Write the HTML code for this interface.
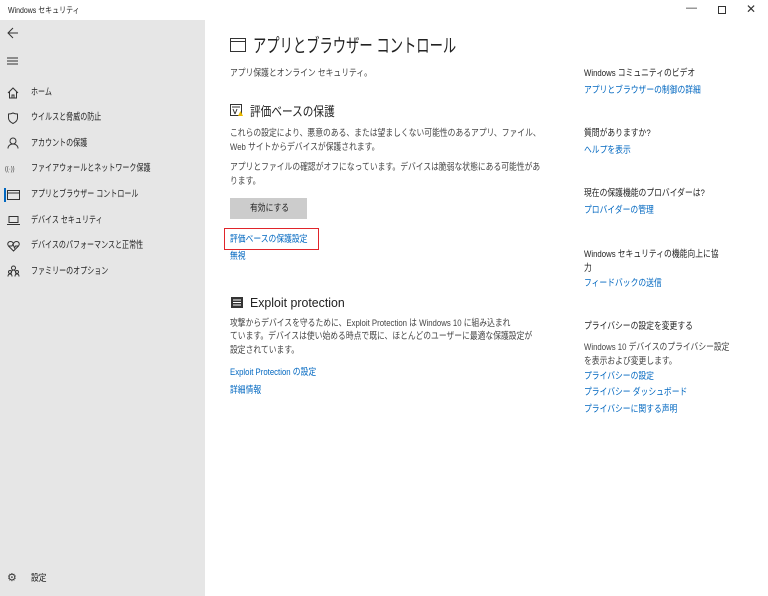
<!DOCTYPE html>
<html><head><meta charset="utf-8"><style>
*{margin:0;padding:0;box-sizing:border-box}
body{width:768px;height:596px;overflow:hidden;background:#fff;font-family:"Liberation Sans","Noto Sans CJK JP",sans-serif;color:#222;position:relative;font-size:9.5px}
.a{position:absolute;white-space:nowrap;line-height:12px;transform:scaleX(.82);transform-origin:0 0}
.sb{transform:scaleX(.74)}
.side{position:absolute;left:0;top:20px;width:205px;height:576px;background:#e6e6e6}
.l{color:#0067c0}
.g{color:#444}
svg{position:absolute}
</style></head><body>
<div class="a" style="left:8px;top:4px;font-size:8.5px">Windows セキュリティ</div>
<div class="a" style="left:686px;top:2px;font-size:11px;color:#333;transform:none">—</div>
<div style="position:absolute;left:718px;top:6px;width:8px;height:8px;border:1px solid #333"></div>
<div class="a" style="left:746px;top:3px;font-size:12px;color:#333;transform:none">✕</div>
<div class="side"></div>
<svg style="left:7px;top:27px" width="12" height="12"><path d="M11 6H1M6 1L1 6l5 5" stroke="#333" fill="none"/></svg>
<svg style="left:7px;top:57px" width="12" height="8"><path d="M0 1h11M0 4h11M0 7h11" stroke="#333"/></svg>
<div style="position:absolute;left:4px;top:188px;width:2px;height:14px;background:#0067c0"></div>
<svg style="left:7px;top:87px" width="12" height="12"><path d="M1 6L6 1l5 5M2.5 5v6h7V5M5 11V8h2v3" stroke="#333" fill="none"/></svg>
<svg style="left:7px;top:112px" width="12" height="12"><path d="M6 1C4 2 2 2 1.5 2v4c0 3 2.5 4.5 4.5 5.5 2-1 4.5-2.5 4.5-5.5V2C10 2 8 2 6 1z" stroke="#333" fill="none"/></svg>
<svg style="left:7px;top:137px" width="12" height="12"><circle cx="6" cy="4" r="3" stroke="#333" fill="none"/><path d="M1 11.5c0-3 2.5-4.5 5-4.5s5 1.5 5 4.5" stroke="#333" fill="none"/></svg>
<div class="a" style="left:5px;top:164px;font-size:7px;color:#333">((·))</div>
<svg style="left:7px;top:189px" width="13" height="12"><rect x="0.5" y="1.5" width="12" height="9" stroke="#333" fill="none"/><path d="M0.5 4h12" stroke="#333"/></svg>
<svg style="left:7px;top:214px" width="13" height="12"><rect x="2" y="2.5" width="9" height="6" stroke="#333" fill="none"/><path d="M0 10.5h13" stroke="#333"/></svg>
<svg style="left:7px;top:240px" width="13" height="12"><path d="M6.5 11L1.5 6C0 4 1 1.5 3.5 1.5 5 1.5 6 2.5 6.5 3.5 7 2.5 8 1.5 9.5 1.5 12 1.5 13 4 11.5 6z M2 6h3l1-2 1.5 4 1-2h3" stroke="#333" fill="none"/></svg>
<svg style="left:7px;top:265px" width="13" height="12"><circle cx="6.5" cy="3" r="2" stroke="#333" fill="none"/><circle cx="3" cy="7" r="1.5" stroke="#333" fill="none"/><circle cx="10" cy="7" r="1.5" stroke="#333" fill="none"/><path d="M1 11.5c0-2 1-2.5 2-2.5s2 .5 2 2.5M8 11.5c0-2 1-2.5 2-2.5s2 .5 2 2.5M4 9c0-2 1-4 2.5-4S9 7 9 9" stroke="#333" fill="none"/></svg>
<div class="a sb" style="left:31px;top:87px">ホーム</div>
<div class="a sb" style="left:31px;top:112px">ウイルスと脅威の防止</div>
<div class="a sb" style="left:31px;top:138px">アカウントの保護</div>
<div class="a sb" style="left:31px;top:163px">ファイアウォールとネットワーク保護</div>
<div class="a sb" style="left:31px;top:189px">アプリとブラウザー コントロール</div>
<div class="a sb" style="left:31px;top:215px">デバイス セキュリティ</div>
<div class="a sb" style="left:31px;top:240px">デバイスのパフォーマンスと正常性</div>
<div class="a sb" style="left:31px;top:266px">ファミリーのオプション</div>
<div class="a" style="left:7px;top:572px;font-size:11px;color:#333;transform:none">⚙</div>
<div class="a" style="left:31px;top:573px">設定</div>

<svg style="left:230px;top:38px" width="16" height="14"><rect x="0.5" y="0.5" width="15" height="13" stroke="#333" fill="none"/><path d="M0.5 3.5h15" stroke="#333"/></svg>
<div class="a" style="left:253px;top:35px;font-size:19px;line-height:24px;transform:scaleX(.7)">アプリとブラウザー コントロール</div>
<div class="a g" style="left:230px;top:68px">アプリ保護とオンライン セキュリティ。</div>
<svg style="left:230px;top:104px" width="13" height="13"><rect x="0.5" y="0.5" width="11" height="11" stroke="#333" fill="none"/><path d="M2 3h8M3 5l2 5M7 5l-2 5" stroke="#333" fill="none"/><path d="M8 12l2.5-5 2.5 5z" fill="#e8b800"/></svg>
<div class="a" style="left:250px;top:103px;font-size:13px;line-height:18px">評価ベースの保護</div>
<div class="a g" style="left:230px;top:127px;line-height:14px">これらの設定により、悪意のある、または望ましくない可能性のあるアプリ、ファイル、<br>Web サイトからデバイスが保護されます。</div>
<div class="a g" style="left:230px;top:161px;line-height:14px">アプリとファイルの確認がオフになっています。デバイスは脆弱な状態にある可能性があ<br>ります。</div>
<div style="position:absolute;left:230px;top:198px;width:77px;height:21px;background:#ccc"></div>
<div class="a" style="left:250px;top:203px">有効にする</div>
<div style="position:absolute;left:224px;top:228px;width:95px;height:22px;border:1.5px solid #e0242a"></div>
<div class="a l" style="left:230px;top:234px">評価ベースの保護設定</div>
<div class="a l" style="left:230px;top:251px">無視</div>
<svg style="left:231px;top:297px" width="12" height="11"><rect x="0" y="0" width="12" height="11" fill="#333"/><path d="M2 3h8M2 5.5h8M2 8h8" stroke="#fff"/></svg>
<div class="a" style="left:250px;top:294px;font-size:13px;line-height:18px;transform:scaleX(.95)">Exploit protection</div>
<div class="a g" style="left:230px;top:317px;line-height:13.3px">攻撃からデバイスを守るために、Exploit Protection は Windows 10 に組み込まれ<br>ています。デバイスは使い始める時点で既に、ほとんどのユーザーに最適な保護設定が<br>設定されています。</div>
<div class="a l" style="left:230px;top:367px">Exploit Protection の設定</div>
<div class="a l" style="left:230px;top:385px">詳細情報</div>

<div class="a" style="left:584px;top:68px">Windows コミュニティのビデオ</div>
<div class="a l" style="left:584px;top:85px">アプリとブラウザーの制御の詳細</div>
<div class="a" style="left:584px;top:128px">質問がありますか?</div>
<div class="a l" style="left:584px;top:145px">ヘルプを表示</div>
<div class="a" style="left:584px;top:188px">現在の保護機能のプロバイダーは?</div>
<div class="a l" style="left:584px;top:205px">プロバイダーの管理</div>
<div class="a" style="left:584px;top:248px;line-height:14px">Windows セキュリティの機能向上に協<br>力</div>
<div class="a l" style="left:584px;top:278px">フィードバックの送信</div>
<div class="a" style="left:584px;top:321px">プライバシーの設定を変更する</div>
<div class="a g" style="left:584px;top:341px;line-height:14px">Windows 10 デバイスのプライバシー設定<br>を表示および変更します。</div>
<div class="a l" style="left:584px;top:371px">プライバシーの設定</div>
<div class="a l" style="left:584px;top:387px">プライバシー ダッシュボード</div>
<div class="a l" style="left:584px;top:404px">プライバシーに関する声明</div>
</body></html>
